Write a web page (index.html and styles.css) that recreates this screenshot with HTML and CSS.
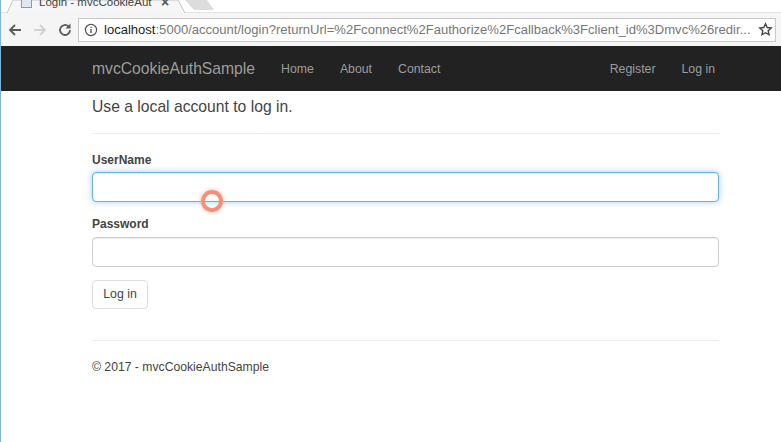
FILE: index.html
```html
<!DOCTYPE html>
<html>

<head>
  <meta charset="UTF-8">
  <title>Login - mvcCookieAuthSample</title>
  <link rel="stylesheet" href="styles.css">
</head>

<body>
  <div class="tab-strip">
    <svg class="tab-shape" width="780" height="14" viewBox="0 0 780 14">
      <path d="M184 0l9 10h20l-7-10z" fill="#dcdcdc"/>
      <path d="M0 13H6L12 0h165l7 13h596" fill="#f6f6f6" stroke="#c4c4c4"/>
    </svg>
    <div class="tab">
      <span class="favicon"></span>
      <span class="tab-title">Login - mvcCookieAut</span>
      <span class="tab-close">×</span>
    </div>
  </div>

  <div class="toolbar">
    <svg class="tool-icon" width="16" height="16" viewBox="0 0 16 16">
      <path d="M14 8H3M8 3L3 8l5 5" fill="none" stroke="#5a5a5a" stroke-width="1.8"/>
    </svg>
    <svg class="tool-icon" width="16" height="16" viewBox="0 0 16 16">
      <path d="M2 8h11M8 3l5 5-5 5" fill="none" stroke="#d2d2d2" stroke-width="1.8"/>
    </svg>
    <svg class="tool-icon" width="16" height="16" viewBox="0 0 16 16">
      <path d="M13 8a5 5 0 1 1-1.5-3.6" fill="none" stroke="#5a5a5a" stroke-width="1.8"/>
      <path d="M13.5 1.5v5h-5z" fill="#5a5a5a"/>
    </svg>
    <div class="address-bar">
      <svg width="14" height="14" viewBox="0 0 14 14">
        <circle cx="7" cy="7" r="5.6" fill="none" stroke="#555" stroke-width="1.2"/>
        <path d="M7 6v4M7 3.8v1.3" stroke="#555" stroke-width="1.3"/>
      </svg>
      <span class="url"><span class="url-host">localhost</span>:5000/account/login?returnUrl=%2Fconnect%2Fauthorize%2Fcallback%3Fclient_id%3Dmvc%26redir...</span>
      <svg class="star" width="15" height="15" viewBox="0 0 15 15">
        <path d="M7.5 1.8l1.7 3.7 4 .5-3 2.7.8 4-3.5-2-3.5 2 .8-4-3-2.7 4-.5z" fill="none" stroke="#444" stroke-width="1.4"/>
      </svg>
    </div>
  </div>

  <nav class="navbar">
    <a class="brand">mvcCookieAuthSample</a>
    <a class="nav-link">Home</a>
    <a class="nav-link">About</a>
    <a class="nav-link">Contact</a>
    <a class="nav-link nav-right">Register</a>
    <a class="nav-link">Log in</a>
  </nav>

  <div class="container">
    <h4 class="intro">Use a local account to log in.</h4>
    <hr class="rule-top">

    <label class="field-label">UserName</label>
    <div class="input input-focus"></div>

    <label class="field-label">Password</label>
    <div class="input"></div>

    <div class="btn">Log in</div>

    <hr class="rule-bottom">
    <p class="footer">© 2017 - mvcCookieAuthSample</p>
  </div>

  <div class="cursor-ring"></div>
</body>
</html>
```

FILE: styles.css
```css
html, body {
  margin: 0;
  padding: 0;
  height: 442px;
  overflow: hidden;
}

body {
  background-color: #fff;
  font-family: "Liberation Sans", Arial, sans-serif;
  color: #444;
  border-left: 1px solid #7fb4e0;
  box-sizing: border-box;
}

.tab-strip {
  position: relative;
  height: 13px;
  overflow: hidden;
}

.tab-shape {
  position: absolute;
  left: 0;
  top: 0;
}

.tab {
  position: absolute;
  left: 20px;
  top: -5px;
  display: flex;
  align-items: center;
  height: 14px;
  font-size: 11.5px;
  color: #444;
}

.favicon {
  width: 11px;
  height: 12px;
  margin-right: 7px;
  background-color: #dfe8f3;
  border: 1px solid #7d9cc4;
  box-sizing: border-box;
}

.tab-title {
  width: 113px;
  overflow: hidden;
  white-space: nowrap;
}

.tab-close {
  margin-left: 9px;
  font-size: 14px;
  font-weight: bold;
  color: #555;
}

.toolbar {
  display: flex;
  align-items: center;
  height: 33px;
  padding: 0 5px 0 0;
  box-sizing: border-box;
  background-color: #f5f5f5;
}

.tool-icon {
  margin-left: 6px;
  margin-right: 3px;
  flex-shrink: 0;
}

.address-bar {
  display: flex;
  align-items: center;
  gap: 6px;
  flex: 1;
  height: 24px;
  margin-left: 2px;
  padding: 0 2px 0 5px;
  box-sizing: border-box;
  background-color: #fff;
  border: 1px solid #c9c9c9;
}

.url {
  font-size: 13.05px;
  color: #777;
  white-space: nowrap;
}

.url-host {
  color: #222;
}

.star {
  margin-left: auto;
  flex-shrink: 0;
}

.navbar {
  display: flex;
  align-items: center;
  height: 45px;
  padding-left: 91px;
  padding-right: 53px;
  background-color: #222;
}

.brand {
  font-size: 15.7px;
  color: #9d9d9d;
  margin-right: 13px;
}

.nav-link {
  font-size: 12.3px;
  color: #9d9d9d;
  margin-left: 13px;
  margin-right: 13px;
}

.nav-right {
  margin-left: auto;
}

.container {
  width: 627px;
  margin-left: 91px;
}

.intro {
  margin: 7px 0 0 0;
  font-size: 15.7px;
  font-weight: normal;
  line-height: 18px;
}

hr {
  border: none;
  border-top: 1px solid #eee;
  margin: 0;
}

.rule-top {
  margin-top: 17px;
  margin-bottom: 19px;
}

.field-label {
  display: block;
  font-size: 12px;
  font-weight: bold;
  line-height: 14px;
  margin-bottom: 5px;
}

.input {
  height: 30px;
  margin-bottom: 15px;
  box-sizing: border-box;
  background-color: #fff;
  border: 1px solid #ccc;
  border-radius: 4px;
  box-shadow: inset 0 1px 1px rgba(0, 0, 0, .075);
}

.input + .field-label {
  margin-bottom: 6px;
}

.input + .field-label + .input {
  margin-bottom: 13px;
}

.input-focus {
  border-color: #66afe9;
  box-shadow: inset 0 1px 1px rgba(0, 0, 0, .075), 0 0 6px rgba(102, 175, 233, .6);
}

.btn {
  display: block;
  width: 56px;
  height: 29px;
  box-sizing: border-box;
  border: 1px solid #ddd;
  border-radius: 4px;
  font-size: 12.3px;
  line-height: 27px;
  text-align: center;
  background-color: #fff;
}

.rule-bottom {
  margin-top: 31px;
  margin-bottom: 19px;
}

.footer {
  margin: 0;
  font-size: 12.2px;
  line-height: 14px;
}

/* click highlight from the screen recorder */
.cursor-ring {
  position: absolute;
  left: 201px;
  top: 190px;
  width: 22px;
  height: 22px;
  box-sizing: border-box;
  border: 4px solid #f4907a;
  border-radius: 50%;
  box-shadow: 0 0 4px #f7b3a3;
}
```
